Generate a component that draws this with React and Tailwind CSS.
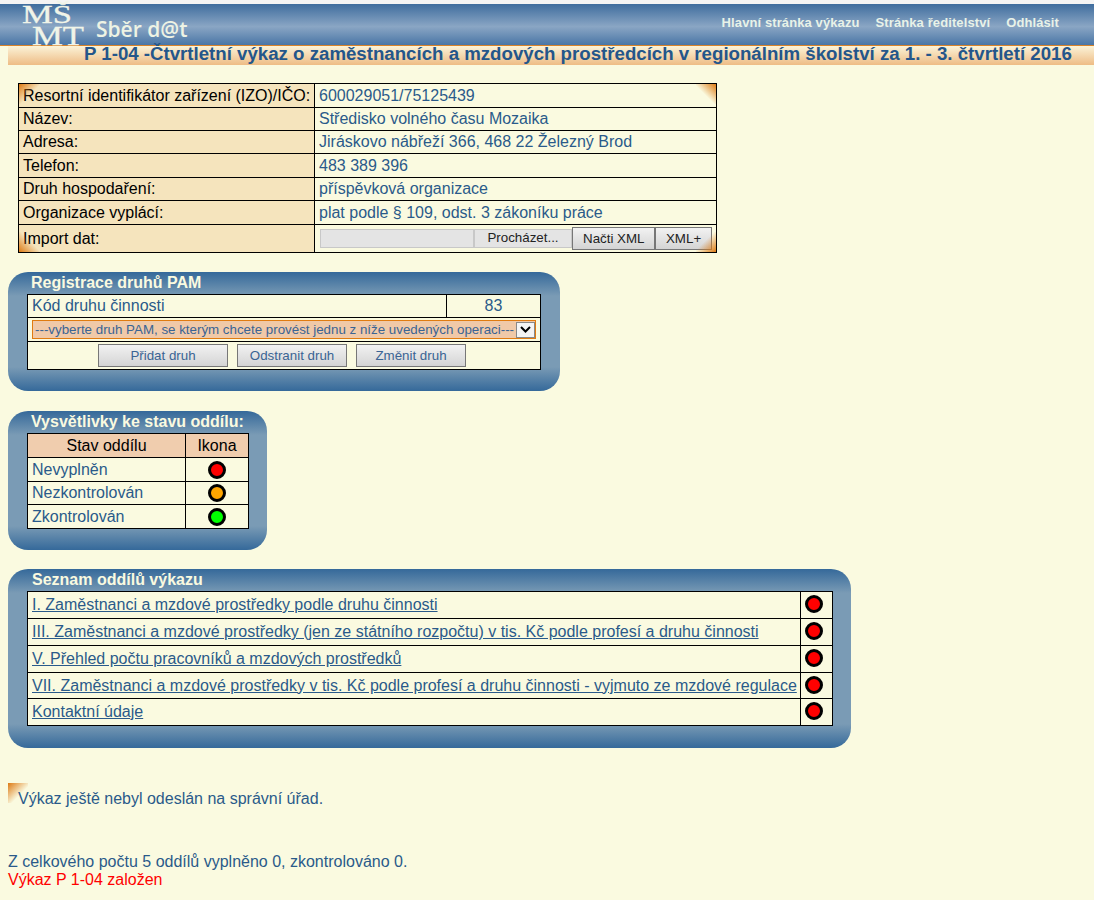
import React from 'react';

const infoRows = [
  ['Resortní identifikátor zařízení (IZO)/IČO:', '600029051/75125439', 'h-6'],
  ['Název:', 'Středisko volného času Mozaika', 'h-[23px]'],
  ['Adresa:', 'Jiráskovo nábřeží 366, 468 22 Železný Brod', 'h-[23px]'],
  ['Telefon:', '483 389 396', 'h-6'],
  ['Druh hospodaření:', 'příspěvková organizace', 'h-[23px]'],
  ['Organizace vyplácí:', 'plat podle § 109, odst. 3 zákoníku práce', 'h-6'],
];

const legend = [
  ['Nevyplněn', 'bg-[#ff0000]', 'h-6'],
  ['Nezkontrolován', 'bg-[#ffa500]', 'h-[23px]'],
  ['Zkontrolován', 'bg-[#00ff00]', 'h-6'],
];

const sections = [
  ['I. Zaměstnanci a mzdové prostředky podle druhu činnosti', 'h-[27px]'],
  ['III. Zaměstnanci a mzdové prostředky (jen ze státního rozpočtu) v tis. Kč podle profesí a druhu činnosti', 'h-[27px]'],
  ['V. Přehled počtu pracovníků a mzdových prostředků', 'h-[27px]'],
  ['VII. Zaměstnanci a mzdové prostředky v tis. Kč podle profesí a druhu činnosti - vyjmuto ze mzdové regulace', 'h-[26px]'],
  ['Kontaktní údaje', 'h-[27px]'],
];

const panelBg = 'bg-[linear-gradient(to_bottom,#35699a_0px,#7a9bb5_24px,#7a9bb5_calc(100%-24px),#35699a_100%)]';
const cell = 'border border-black px-1 py-0 font-normal leading-[18px]';

function Dot({ color, className }) {
  return <span className={`block w-[18px] h-[18px] rounded-full border-[3px] border-black ${color} ${className}`}></span>;
}

function Logo() {
  return (
    <svg width="70" height="41" viewBox="0 0 70 41" className="ml-[22px] shrink-0 overflow-visible" fill="#f0f4e8" stroke="#f0f4e8" strokeWidth="0.3" fontFamily="'Liberation Serif', serif">
      <text x="0" y="19" fontSize="26" textLength="50" lengthAdjust="spacingAndGlyphs">MŠ</text>
      <text x="10" y="41" fontSize="27" textLength="52" lengthAdjust="spacingAndGlyphs">MT</text>
    </svg>
  );
}

function Button({ children, className }) {
  return (
    <button className={`border border-[#777] bg-[linear-gradient(to_bottom,#f2f2f2,#d4d4d4)] text-[13.33px] leading-none ${className}`}>
      {children}
    </button>
  );
}

export default function App() {
  return (
    <div className="min-h-[900px] bg-[#fafae0] font-['Liberation_Sans',Arial,sans-serif] text-[#2a5a8a] text-base overflow-hidden">
      <div className="h-1 bg-[#f4f4f4]"></div>
      <div className="h-[42px] flex items-center border-b border-[#d9832a] bg-[linear-gradient(to_bottom,#3f6d9e,#8aa6c4_55%,#4a76a6)]">
        <Logo />
        <span className="ml-1 font-['Open_Sans',sans-serif] font-semibold text-[21px] text-[#eef3e4] mt-[10px]">Sběr d@t</span>
        <nav className="ml-auto mr-[35px] flex gap-4 text-[13px] font-bold tracking-[0.1px] text-[#e8f2e8] -mt-[4px]">
          <span>Hlavní stránka výkazu</span>
          <span>Stránka ředitelství</span>
          <span>Odhlásit</span>
        </nav>
      </div>
      <div className="ml-2 h-[19px] flex bg-[linear-gradient(to_bottom,#fbf3d8,#eebc85)]">
        <h1 className="relative ml-[76px] text-[18.67px] font-bold leading-[16px] whitespace-nowrap text-[#24568a]">
          P 1-04 -Čtvrtletní výkaz o zaměstnancích a mzdových prostředcích v regionálním školství za 1. - 3. čtvrtletí 2016
        </h1>
      </div>

      <div className="relative ml-[18px] mt-[18px] w-[699px]">
        <table className="w-full border-collapse table-fixed bg-[#fafae0]">
          <tbody>
            {infoRows.map(([label, value, height]) => (
              <tr key={label} className={height}>
                <td className={`${cell} w-[296px] bg-[#f5e4bd] text-black whitespace-nowrap`}>{label}</td>
                <td className={cell}>{value}</td>
              </tr>
            ))}
            <tr className="h-7">
              <td className={`${cell} bg-[#f5e4bd] text-black`}>Import dat:</td>
              <td className={cell}>
                <div className="flex items-center text-[#222]">
                  <span className="w-[154px] h-[19px] ml-px bg-[#e4e4e4] border border-[#c8c8c8]"></span>
                  <span className="w-[99px] h-[19px] bg-[#e4e4e4] border border-[#c8c8c8] text-[13.33px] leading-[16px] text-center">Procházet...</span>
                  <Button className="w-[83px] h-[23px]">Načti XML</Button>
                  <Button className="w-[57px] h-[23px]">XML+</Button>
                </div>
              </td>
            </tr>
          </tbody>
        </table>
        <span className="absolute left-px top-px w-5 h-5 bg-[linear-gradient(135deg,#dd7a14,transparent_55%)]"></span>
        <span className="absolute right-px top-px w-5 h-5 bg-[linear-gradient(225deg,#dd7a14,transparent_55%)]"></span>
        <span className="absolute left-px bottom-px w-5 h-5 bg-[linear-gradient(45deg,#dd7a14,transparent_55%)]"></span>
        <span className="absolute right-px bottom-px w-5 h-5 bg-[linear-gradient(315deg,#dd7a14,transparent_55%)]"></span>
      </div>

      <section className={`ml-2 mt-[19px] w-[552px] h-[119px] rounded-[20px] px-[19px] ${panelBg}`}>
        <h2 className="pl-1 h-[22px] font-bold leading-[21px] text-[#fafae0]">Registrace druhů PAM</h2>
        <table className="w-full border-collapse table-fixed bg-[#fafae0]">
          <tbody>
            <tr className="h-[23px]">
              <td className={cell}>Kód druhu činnosti</td>
              <td className={`${cell} w-[94px] text-center`}>83</td>
            </tr>
            <tr className="h-6">
              <td colSpan={2} className="border border-black px-[3px] py-0">
                <div className="mx-px h-[19px] flex items-center justify-between border border-[#e07b10] bg-[#f0c9a8] text-[13.33px] leading-[15px] text-[#3a6494] whitespace-nowrap overflow-hidden">
                  <span className="pl-[2px]">---vyberte druh PAM, se kterým chcete provést jednu z níže uvedených operaci---</span>
                  <span className="w-[19px] h-[16px] bg-[#f4f4f4] border border-[#888] flex items-center justify-center shrink-0">
                    <svg width="11" height="7" viewBox="0 0 11 7" fill="none" stroke="#000" strokeWidth="2"><path d="M1 1l4.5 4.5L10 1" /></svg>
                  </span>
                </div>
              </td>
            </tr>
            <tr className="h-7">
              <td colSpan={2} className="border border-black p-0">
                <div className="flex gap-[9px] pl-[70px]">
                  <Button className="w-[130px] h-[23px] text-[#3a6494]">Přidat druh</Button>
                  <Button className="w-[110px] h-[23px] text-[#3a6494]">Odstranit druh</Button>
                  <Button className="w-[110px] h-[23px] text-[#3a6494]">Změnit druh</Button>
                </div>
              </td>
            </tr>
          </tbody>
        </table>
      </section>

      <section className={`ml-2 mt-5 w-[259px] h-[139px] rounded-[20px] pl-[19px] pr-[18px] ${panelBg}`}>
        <h2 className="pl-1 h-[22px] font-bold leading-[21px] text-[#fafae0] whitespace-nowrap">Vysvětlivky ke stavu oddílu:</h2>
        <table className="w-full border-collapse table-fixed bg-[#fafae0]">
          <tbody>
            <tr className="h-6 bg-[#f0cdae] text-black text-center">
              <td className={cell}>Stav oddílu</td>
              <td className={`${cell} w-[63px]`}>Ikona</td>
            </tr>
            {legend.map(([label, color, height]) => (
              <tr key={label} className={height}>
                <td className={cell}>{label}</td>
                <td className="border border-black p-0"><Dot color={color} className="mx-auto" /></td>
              </tr>
            ))}
          </tbody>
        </table>
      </section>

      <section className={`ml-2 mt-[19px] w-[843px] h-[179px] rounded-[20px] pl-[19px] pr-[18px] ${panelBg}`}>
        <h2 className="pl-[5px] h-[22px] font-bold leading-[21px] text-[#fafae0]">Seznam oddílů výkazu</h2>
        <table className="w-full border-collapse table-fixed bg-[#fafae0]">
          <tbody>
            {sections.map(([label, height]) => (
              <tr key={label} className={height}>
                <td className={`${cell} whitespace-nowrap`}><span className="underline">{label}</span></td>
                <td className="border border-black p-0 w-8"><Dot color="bg-[#ff0000]" className="ml-1 -mt-[2px]" /></td>
              </tr>
            ))}
          </tbody>
        </table>
      </section>

      <div className="relative ml-2 mt-[35px] h-[47px] pl-[10px] pt-[7px] leading-[18px]">
        <span className="absolute left-0 top-0 w-5 h-5 bg-[linear-gradient(135deg,#dd7a14,transparent_60%)]"></span>
        <p className="relative">Výkaz ještě nebyl odeslán na správní úřad.</p>
      </div>
      <p className="ml-2 mt-[23px] leading-[18px]">Z celkového počtu 5 oddílů vyplněno 0, zkontrolováno 0.</p>
      <p className="ml-2 leading-[18px] text-[#ff0000]">Výkaz P 1-04 založen</p>
    </div>
  );
}
